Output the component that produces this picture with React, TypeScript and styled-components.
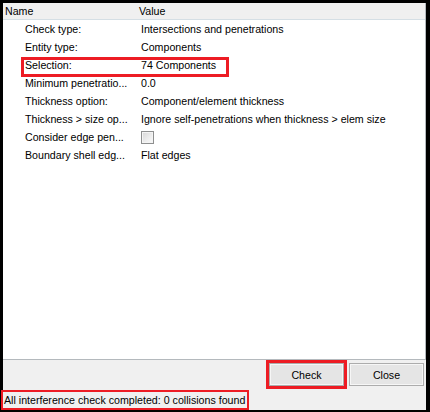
import styled, { createGlobalStyle } from 'styled-components';

const GlobalStyle = createGlobalStyle`
  html, body {
    margin: 0;
    padding: 0;
    background: #000;
  }
  *, *::before, *::after {
    box-sizing: border-box;
  }
`;

const ANNOTATION_RED = '#ed1c24';

type Property = {
  readonly label: string;
  readonly value?: string;
  readonly checkbox?: boolean;
  readonly highlight?: boolean;
};

const properties: Property[] = [
  { label: 'Check type:', value: 'Intersections and penetrations' },
  { label: 'Entity type:', value: 'Components' },
  { label: 'Selection:', value: '74 Components', highlight: true },
  { label: 'Minimum penetratio...', value: '0.0' },
  { label: 'Thickness option:', value: 'Component/element thickness' },
  { label: 'Thickness > size op...', value: 'Ignore self-penetrations when thickness > elem size' },
  { label: 'Consider edge pen...', checkbox: true },
  { label: 'Boundary shell edg...', value: 'Flat edges' },
];

const Styled = {
  Frame: styled.div`
    width: 430px;
    height: 412px;
    padding: 3px 4px 2px 3px;
    background: #000;
    font-family: 'Liberation Sans', Arial, sans-serif;
    font-size: 10.65px;
    color: #000;
  `,
  Window: styled.div`
    height: 100%;
    display: flex;
    flex-direction: column;
    background: #f0f0f0;
  `,
  Grid: styled.div`
    flex: 1;
    display: flex;
    flex-direction: column;
    background: #fff;
    border-right: 1px solid #b4b9bd;
    border-bottom: 1px solid #b4b9bd;
  `,
  HeaderRow: styled.div`
    display: grid;
    grid-template-columns: 134px 1fr;
    height: 17px;
    align-items: center;
    background: #f0f0f0;
    border-bottom: 1px solid #d5dfe5;
  `,
  HeaderCell: styled.span`
    padding-left: 2px;
    white-space: nowrap;
  `,
  Row: styled.div<{ $highlight?: boolean }>`
    position: relative;
    display: grid;
    grid-template-columns: 134px 1fr;
    height: 18px;
    align-items: center;
    ${({ $highlight }) =>
      $highlight &&
      `
      &::after {
        content: '';
        position: absolute;
        left: 18px;
        top: 1px;
        width: 208px;
        height: 20px;
        border: 3px solid ${ANNOTATION_RED};
        pointer-events: none;
      }
    `}
  `,
  Label: styled.span`
    padding-left: 22px;
    white-space: nowrap;
    overflow: hidden;
  `,
  Value: styled.span`
    padding-left: 4px;
    white-space: nowrap;
    display: flex;
    align-items: center;
  `,
  CheckBox: styled.span`
    width: 13px;
    height: 13px;
    border: 1px solid #8e8f8f;
    box-shadow: inset 0 0 0 1px #f4f4f4;
    background: linear-gradient(135deg, #d6d6d6 0%, #eeeeee 60%, #fafafa 100%);
  `,
  ButtonBar: styled.div`
    height: 30px;
    display: flex;
    justify-content: flex-end;
    align-items: flex-start;
    gap: 5px;
    padding: 3px 2px 0 0;
  `,
  Button: styled.button<{ $highlight?: boolean }>`
    width: 75px;
    height: 23px;
    padding: 0;
    font: inherit;
    color: #000;
    background: #e5e5e5;
    border: 1px solid #acacac;
    box-shadow: inset 0 0 0 1px #f6f6f6;
    ${({ $highlight }) => $highlight && `outline: 3px solid ${ANNOTATION_RED};`}
  `,
  StatusBar: styled.div`
    height: 20px;
    display: flex;
    align-items: stretch;
  `,
  StatusText: styled.span<{ $highlight?: boolean }>`
    display: flex;
    align-items: center;
    margin-left: -2px;
    padding: 0 2px 0 1px;
    white-space: nowrap;
    border: 2px solid ${({ $highlight }) => ($highlight ? ANNOTATION_RED : 'transparent')};
  `,
};

export default function App() {
  return (
    <>
      <GlobalStyle />
      <Styled.Frame>
        <Styled.Window>
          <Styled.Grid>
            <Styled.HeaderRow>
              <Styled.HeaderCell>Name</Styled.HeaderCell>
              <Styled.HeaderCell>Value</Styled.HeaderCell>
            </Styled.HeaderRow>
            {properties.map((p) => (
              <Styled.Row key={p.label} $highlight={p.highlight}>
                <Styled.Label>{p.label}</Styled.Label>
                <Styled.Value>{p.checkbox ? <Styled.CheckBox /> : p.value}</Styled.Value>
              </Styled.Row>
            ))}
          </Styled.Grid>
          <Styled.ButtonBar>
            <Styled.Button $highlight>Check</Styled.Button>
            <Styled.Button>Close</Styled.Button>
          </Styled.ButtonBar>
          <Styled.StatusBar>
            <Styled.StatusText $highlight>All interference check completed: 0 collisions found</Styled.StatusText>
          </Styled.StatusBar>
        </Styled.Window>
      </Styled.Frame>
    </>
  );
}
